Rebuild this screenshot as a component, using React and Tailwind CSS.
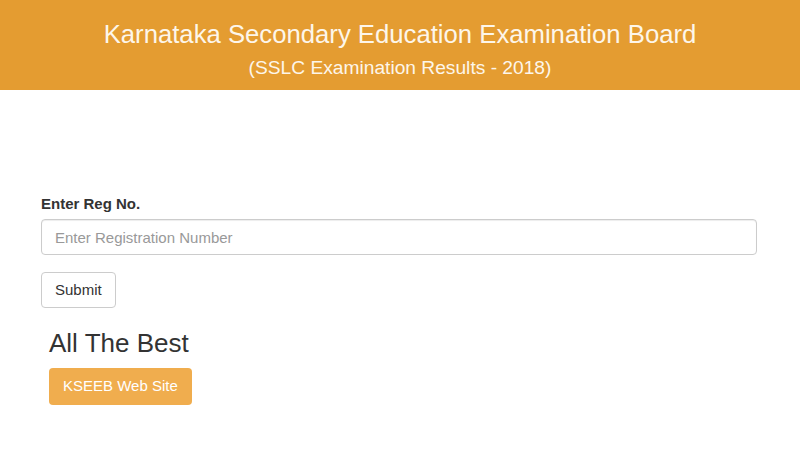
export default function App() {
  return (
    <div className="min-h-screen bg-white font-['Liberation_Sans',Arial,sans-serif] text-[#333]">
      {/* Header */}
      <div className="h-[90px] bg-[#e49c31] flex flex-col items-center pt-[18px] text-[#fdf6ea]">
        <h1 className="text-[25.7px] leading-[32px]">Karnataka Secondary Education Examination Board</h1>
        <p className="text-[19.2px] leading-[24px] mt-[6px]">(SSLC Examination Results - 2018)</p>
      </div>

      <div className="pl-[41px] pr-[43px] pt-[104px]">
        <label className="block text-[15px] font-bold leading-[20px] mb-[5px] text-[#333]">Enter Reg No.</label>
        <input
          type="text"
          placeholder="Enter Registration Number"
          className="w-full h-[36px] border border-[#ccc] rounded-[4px] px-[13px] text-[15px] placeholder-[#999] shadow-[inset_0_1px_1px_rgba(0,0,0,0.075)] outline-none"
        />
        <button className="mt-[17px] h-[36px] px-[13px] border border-[#ccc] rounded-[4px] bg-white text-[15px] text-[#333]">
          Submit
        </button>

        <div className="pl-[8px] pt-[20px]">
          <h2 className="text-[26px] leading-[30px] text-[#333]">All The Best</h2>
          <button className="mt-[10px] h-[37px] px-[14px] rounded-[4px] bg-[#f0ad4e] text-[15px] text-white">
            KSEEB Web Site
          </button>
        </div>
      </div>
    </div>
  );
}
